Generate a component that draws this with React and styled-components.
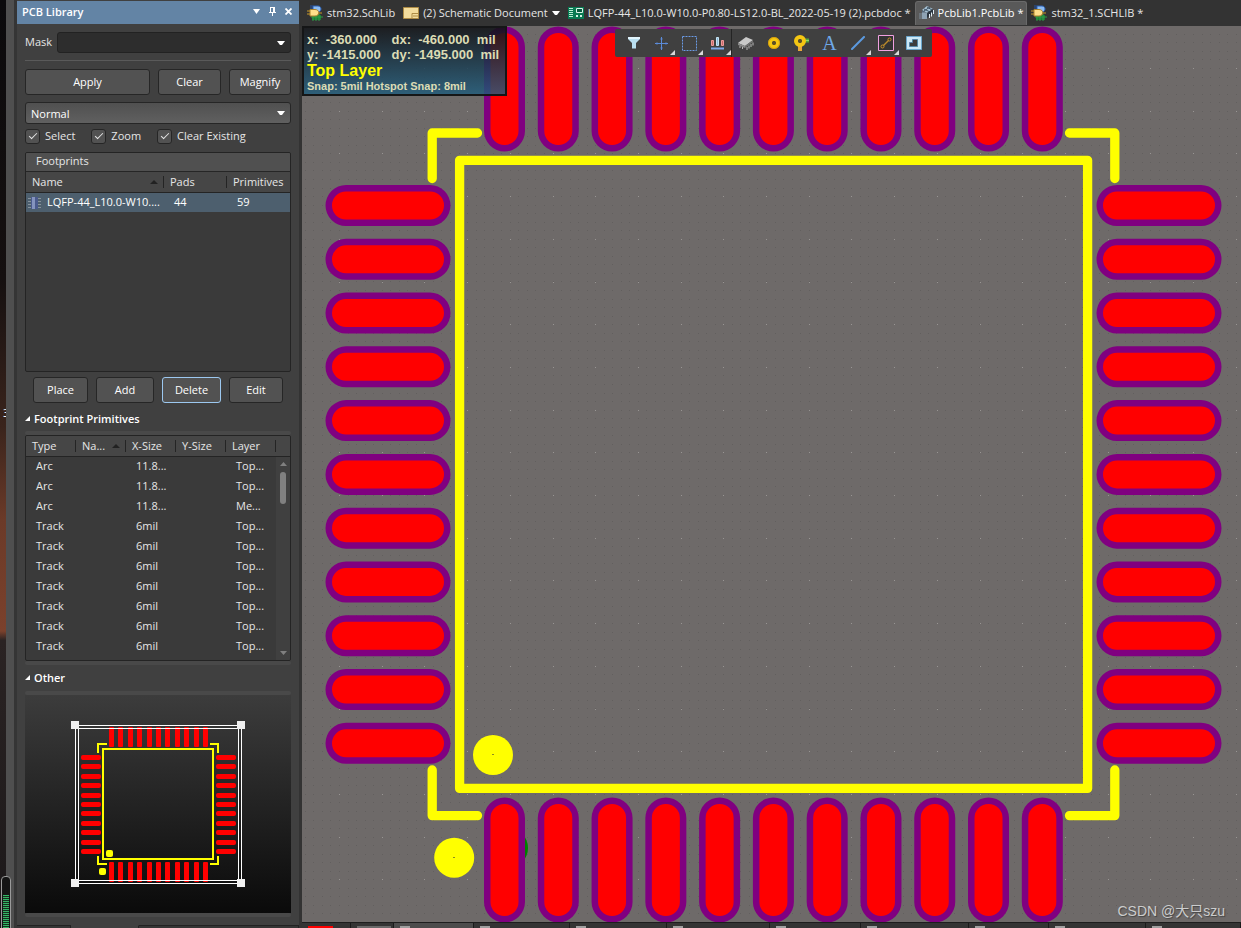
import React, { useState } from 'react';
import styled, { createGlobalStyle } from 'styled-components';

const GlobalStyle = createGlobalStyle`
  *, *::before, *::after {
    box-sizing: border-box;
  }

  body {
    margin: 0;
    background: #333333;
    color: #e6e6e6;
    font-family: "Open Sans", "Noto Sans CJK SC", sans-serif;
    font-size: 11px;
    line-height: 16px;
  }

  button, input, select {
    font: inherit;
    color: inherit;
  }
`;

const Shell = styled.div`
  display: flex;
  height: 100vh;
  min-height: 928px;
  overflow: hidden;
`;

const DesktopEdge = styled.div`
  flex: none;
  display: flex;
  width: 17px;
  background: linear-gradient(#0b0a0c 0%, #151010 30%, #3a241c 46%, #6b3a28 56%, #7b412c 68%, #2a2323 69%, #1b1819 100%);
  position: relative;
  overflow: hidden;
`;

const EdgeBar = styled.div`
  position: relative;
  z-index: 1;
  width: 11px;
  margin-left: auto;
  background: #4f4f4f;
  border-right: 3px solid #353535;
`;

const DesktopLabel = styled.span`
  position: absolute;
  top: 405px;
  left: 3px;
  color: #ffffff;
  font-size: 10px;
`;

const LevelMeter = styled.div`
  position: absolute;
  z-index: 2;
  left: 1px;
  bottom: -4px;
  width: 10px;
  height: 56px;
  padding: 18px 1px 0;
  border: 1px solid #9a9a9a;
  border-radius: 4px;
  background: #141414;

  &::after {
    content: "";
    display: block;
    height: 40px;
    background: repeating-linear-gradient(#35b565 0 1px, #14301e 1px 2px);
  }
`;

const Panel = styled.aside`
  flex: none;
  display: flex;
  flex-direction: column;
  width: 285px;
  padding-top: 1px;
  border-right: 3px solid #333333;
  background: #404040;
`;

const PanelHeader = styled.header`
  display: flex;
  align-items: center;
  height: 23px;
  padding: 0 3px 2px 5px;
  background: #6384a5;
  color: #ffffff;
`;

const PanelTitle = styled.h1`
  flex: 1;
  margin: 0;
  font-size: 11px;
  font-weight: 600;
`;

const HeaderButton = styled.button`
  display: flex;
  align-items: center;
  justify-content: center;
  width: 16px;
  height: 16px;
  padding: 0;
  border: 0;
  background: none;
`;

const PanelBody = styled.div`
  display: flex;
  flex: 1;
  flex-direction: column;
  padding: 8px 8px 0;
`;

const MaskRow = styled.div`
  display: flex;
  align-items: center;
  gap: 5px;
  padding-bottom: 7px;
  border-bottom: 1px solid #5a5a5a;
`;

const MaskLabel = styled.label`
  flex: none;
  width: 27px;
  padding-bottom: 2px;
`;

const Combo = styled.div`
  position: relative;
  width: 100%;

  svg {
    position: absolute;
    top: 9px;
    right: 6px;
    pointer-events: none;
  }
`;

const MaskInput = styled.input`
  display: block;
  width: 100%;
  height: 21px;
  padding: 0 20px 0 5px;
  border: 1px solid #222222;
  border-radius: 3px;
  background: #2d2d2d;
`;

const ModeSelect = styled.select`
  display: block;
  width: 100%;
  height: 22px;
  padding: 1px 20px 0 5px;
  border: 1px solid #262626;
  border-radius: 3px;
  background: linear-gradient(#505050, #606060);
  color: #ffffff;
  appearance: none;
`;

const ButtonRow = styled.div`
  display: grid;
  grid-template-columns: ${(props) => props.$columns};
  gap: 8px;
  margin: ${(props) => props.$margin};
`;

const PushButton = styled.button`
  height: 26px;
  padding: 0 8px;
  border: 1px solid ${(props) => (props.$focused ? '#9cc8f0' : '#262626')};
  border-radius: 3px;
  background: #525252;
  color: #ffffff;
`;

const CheckRow = styled.div`
  display: flex;
  gap: 16px;
  height: 16px;
  margin: 4px 0 8px;
`;

const CheckLabel = styled.label`
  display: flex;
  align-items: center;
  gap: 5px;
`;

const CheckBox = styled.input`
  width: 15px;
  height: 15px;
  margin: 0;
  border: 1px solid #262626;
  border-radius: 3px;
  background: #525252;
  appearance: none;

  &:checked::before {
    content: "";
    display: block;
    width: 8px;
    height: 4px;
    margin: 3px 0 0 3px;
    border: solid #e6e6e6;
    border-width: 0 0 1px 1px;
    transform: rotate(-45deg);
  }
`;

const ListFrame = styled.div`
  position: relative;
  height: ${(props) => props.$height}px;
  border: 1px solid #242424;
  border-radius: 2px;
  background: #3a3a3a;
  overflow: hidden;
`;

const Grid = styled.table`
  width: 100%;
  border-collapse: collapse;
  table-layout: fixed;

  caption {
    height: 19px;
    padding-left: 10px;
    border-bottom: 1px solid #262626;
    background: #505050;
    text-align: left;
  }

  th {
    height: 20px;
    padding: 0 0 0 6px;
    border-bottom: 1px solid #242424;
    background: linear-gradient(#242424, #242424) right center / 1px 12px no-repeat #464646;
    font-weight: 400;
    text-align: left;
    white-space: nowrap;
  }

  th:last-child {
    background: #464646;
  }

  th svg {
    float: right;
    margin: 6px 6px 0 0;
  }

  td {
    height: 20px;
    padding: 0 0 0 10px;
    overflow: hidden;
    white-space: nowrap;
  }
`;

const SelectedRow = styled.tr`
  background: #4d5f6e;
  color: #ffffff;

  td:first-child {
    padding-left: 2px;
  }

  td svg {
    margin-right: 6px;
    vertical-align: middle;
  }
`;

const ScrollTrack = styled.div`
  position: absolute;
  top: 21px;
  right: 0;
  bottom: 0;
  display: flex;
  flex-direction: column;
  align-items: center;
  width: 14px;
  padding: 5px 0;
  background: #404040;
`;

const ScrollThumb = styled.div`
  width: 6px;
  height: 32px;
  margin: 6px 0 auto;
  border-radius: 3px;
  background: #808080;
`;

const SectionTitle = styled.h2`
  display: flex;
  align-items: center;
  gap: 3px;
  height: 18px;
  margin: ${(props) => props.$margin};
  color: #ffffff;
  font-size: 11px;
  font-weight: 600;
`;

const Rail = styled.div`
  height: 4px;
  border-radius: 2px;
  background: #494949;
`;

const Preview = styled.div`
  height: 218px;
  background: linear-gradient(#3c3c3c, #0a0a0a);

  svg {
    display: block;
    width: 100%;
    height: 100%;
  }
`;

const PanelTabs = styled.div`
  display: grid;
  grid-template-columns: 54px 68px 1fr;
  height: 3px;
  margin-top: auto;
  background: #404040;
`;

const PanelTab = styled.div`
  border-top: 1px solid ${(props) => (props.$active ? '#404040' : '#222222')};
  border-right: 1px solid #222222;
  background: ${(props) => (props.$active ? '#404040' : '#353535')};
`;

const Workspace = styled.main`
  display: flex;
  flex: 1;
  flex-direction: column;
  min-width: 0;
`;

const TabBar = styled.nav`
  display: flex;
  flex: none;
  align-items: flex-end;
  height: 26px;
  padding: 0 1px 1px;
  background: #333333;
`;

const DocTab = styled.a`
  display: flex;
  flex: none;
  align-items: center;
  gap: 4px;
  height: 24px;
  padding: 0 3px 1px;
  border: 1px solid ${(props) => (props.$active ? '#6a6a6a' : 'transparent')};
  border-bottom: 0;
  border-radius: 3px 3px 0 0;
  background: ${(props) => (props.$active ? '#595959' : 'transparent')};
  color: ${(props) => (props.$active ? '#ffffff' : '#e6e6e6')};
  text-decoration: none;
  white-space: nowrap;
`;

const Canvas = styled.section`
  position: relative;
  flex: 1;
  min-height: 0;
  background: #6e6a69;
  overflow: hidden;
`;

const Board = styled.svg`
  display: block;
  width: 100%;
  height: 100%;
`;

const Readout = styled.div`
  position: absolute;
  top: 0;
  left: 0;
  width: 205px;
  height: 70px;
  padding: 4px 3px;
  border: 2px solid #151617;
  background: linear-gradient(rgba(16, 18, 22, 0.86), rgba(32, 92, 124, 0.82));
  color: #dcdcb4;
  font-family: "Liberation Sans", sans-serif;
  font-size: 13px;
  font-weight: 700;
  line-height: 15px;
  white-space: pre;
`;

const LayerName = styled.div`
  color: #ffff00;
  font-size: 16px;
  line-height: 18px;
`;

const SnapInfo = styled.div`
  font-size: 11px;
  line-height: 13px;
`;

const ToolBar = styled.div`
  position: absolute;
  top: 3px;
  left: 313px;
  display: flex;
  align-items: center;
  height: 28px;
  padding: 0 4px 0 5px;
  border-radius: 2px;
  background: #404040;
`;

const ToolButton = styled.button`
  position: relative;
  display: flex;
  align-items: center;
  justify-content: center;
  width: 28px;
  height: 28px;
  padding: 0;
  border: 0;
  border-right: 1px solid ${(props) => (props.$divider ? '#242424' : 'transparent')};
  background: none;

  &::after {
    content: "";
    display: ${(props) => (props.$menu ? 'block' : 'none')};
    position: absolute;
    right: 0;
    bottom: 2px;
    width: 5px;
    height: 5px;
    background: #d8d8d8;
    clip-path: polygon(100% 0, 100% 100%, 0 100%);
  }
`;

const Watermark = styled.div`
  position: absolute;
  right: 16px;
  bottom: 1px;
  color: #cccccc;
  font-family: "Liberation Sans", "Noto Sans CJK SC", sans-serif;
  font-size: 14px;
  line-height: 20px;
  text-shadow: 1px 1px 1px #444444;
`;

const StatusStrip = styled.div`
  display: grid;
  flex: none;
  grid-template-columns: 49fr 43fr 80fr 96fr 97fr 103fr 91fr 108fr 80fr 97fr 95fr;
  height: 6px;
  border-top: 1px solid #1e1e1e;
  background: #333333;
`;

const StatusTab = styled.div`
  min-width: 0;
  padding: 3px 6px 0;
  border-right: 1px solid #1a1a1a;
  background: ${(props) => (props.$active ? '#4c4c4c' : '#343434')};
  overflow: hidden;

  &::before {
    content: "";
    display: block;
    width: ${(props) => props.$mark || 10}px;
    height: 2px;
    background: ${(props) => props.$color || '#a0a0a0'};
  }
`;

const Caret = () => (
  <svg width="8" height="4" viewBox="0 0 8 4" aria-hidden="true">
    <path d="M0 0h8L5 4H3z" fill="#ffffff" />
  </svg>
);

const SortMark = () => (
  <svg width="8" height="5" viewBox="0 0 8 5" aria-hidden="true">
    <path d="M4 0l4 4H0z" fill="#222222" />
  </svg>
);

const Fold = () => (
  <svg width="6" height="6" viewBox="0 0 6 6" aria-hidden="true">
    <path d="M5 0v5H0z" fill="#ffffff" />
  </svg>
);

const ChipIcon = () => (
  <svg width="13" height="14" viewBox="0 0 13 14" aria-hidden="true">
    <path d="M0 2.5h13M0 5.5h13M0 8.5h13M0 11.5h13" stroke="#87929c" />
    <rect x="3" y="1" width="7" height="12" fill="#4a5a8c" />
    <rect x="4" y="1" width="3" height="12" fill="#8493be" />
  </svg>
);

const SchLibIcon = () => (
  <svg width="16" height="16" viewBox="0 0 16 16" aria-hidden="true">
    <path d="M5 10h9v5H5z" fill="#1f7a35" />
    <path d="M4 12h12M6 9v7M9 9v7M12 9v7" stroke="#2f9e46" />
    <path d="M6 1h5c4 0 4 6 0 6H6z" fill="#8dbcf2" stroke="#2c61b4" />
    <path d="M3 1h3M3 3h3" stroke="#2452a4" />
    <path d="M3 4.5h5c5 0 5 6.5 0 6.5H3z" fill="#ffe08a" stroke="#a9812c" />
    <path d="M0 6h3M0 9h3M12 8h3" stroke="#c9992b" />
  </svg>
);

const SheetIcon = () => (
  <svg width="16" height="12" viewBox="0 0 16 12" aria-hidden="true">
    <path d="M.5 .5h15v11H.5z" fill="#f3dc9c" stroke="#ad8b45" />
    <path d="M9 6.5h6.5M9 6.5v5M10 9h5" stroke="#ad8b45" fill="none" />
  </svg>
);

const PcbDocIcon = () => (
  <svg width="16" height="12" viewBox="0 0 16 12" aria-hidden="true">
    <path d="M0 0h16v12H0z" fill="#087a52" />
    <path d="M1 1.5h4M1 3.5h4M1 5.5h4M1 7.5h4M1 9.5h4" stroke="#b8efd6" />
    <path d="M8.5 1.5h6v4h-6z" fill="#0a5c40" stroke="#d9f5e9" />
    <path d="M8 8h2v2H8zM12 8h2v2h-2z" fill="#d9f5e9" />
  </svg>
);

const PcbLibIcon = () => (
  <svg width="15" height="14" viewBox="0 0 15 14" aria-hidden="true">
    <path d="M3 4l5-4 6 3-6 4z" fill="#a9c4d6" />
    <path d="M5 3l6 3M8 1l5 3M5 5l6-4" stroke="#3d5263" />
    <path d="M3 4l5 3v5l-5-3z" fill="#56697a" />
    <path d="M8 7l6-4v4l-6 5z" fill="#2b3640" />
    <path d="M10.500 8v4M12.500 6.500v4M14.500 4v4" stroke="#e2ecf3" />
    <path d="M3 6.500h5v6.500H3z" fill="#8ea3b4" />
    <path d="M0 8h3M0 10h3M0 12h3" stroke="#7d8c99" />
  </svg>
);

const FilterIcon = () => (
  <svg width="14" height="12" viewBox="0 0 14 12">
    <path d="M1 0h12v2L9 6v5.5H5V6L1 2z" fill="#b9dff0" />
    <path d="M1 1h12" stroke="#e2f4fc" strokeWidth="2" />
  </svg>
);

const CrossIcon = () => (
  <svg width="13" height="13" viewBox="0 0 13 13">
    <path d="M0 6.5h13M6.5 0v13" stroke="#5b8bd8" />
    <path d="M5 2h3M5 11h3M2 5v3M11 5v3" stroke="#5b8bd8" strokeOpacity=".6" />
  </svg>
);

const MarqueeIcon = () => (
  <svg width="15" height="15" viewBox="0 0 15 15">
    <path d="M.5 .5h14v14H.5z" stroke="#6b9be6" strokeDasharray="2 1" fill="none" />
  </svg>
);

const AlignIcon = () => (
  <svg width="13" height="13" viewBox="0 0 13 13">
    <path d="M.5 3.500h2v5h-2zM10.500 3.500h2v5h-2z" fill="#c96b6b" stroke="#f09a9a" />
    <path d="M5.500.500h2v8h-2z" fill="#8fb9d6" stroke="#c5e4f5" />
    <path d="M0 11.500h13" stroke="#7ea9ea" strokeWidth="2" />
  </svg>
);

const PartIcon = () => (
  <svg width="17" height="14" viewBox="0 0 17 14">
    <path d="M1 7l8-6 7 3-8 6z" fill="#c9c9c9" />
    <path d="M1 7l7 3v2L1 9z" fill="#8c8c8c" />
    <path d="M8 10l8-6v2l-8 6z" fill="#707070" />
    <path d="M3 10v2M5.5 11v2M10 11v3M12 9.5v3M14 8v3M16 6.5v3" stroke="#bababa" />
  </svg>
);

const PadIcon = () => (
  <svg width="12" height="12" viewBox="0 0 12 12">
    <circle cx="6" cy="6" r="4" fill="none" stroke="#f5c712" strokeWidth="4" />
    <circle cx="6" cy="6" r="5.5" fill="none" stroke="#cf960b" strokeWidth=".8" />
    <circle cx="6" cy="6" r="1.7" fill="#5f5020" />
  </svg>
);

const ViaIcon = () => (
  <svg width="17" height="16" viewBox="0 0 17 16">
    <path d="M7 10v6" stroke="#e8a93a" strokeWidth="4" />
    <path d="M10 5.5h6" stroke="#55a53c" strokeWidth="4" />
    <path d="M11 5.5h5" stroke="#93d36c" />
    <circle cx="7" cy="6" r="4" fill="none" stroke="#f5c712" strokeWidth="4" />
    <circle cx="7" cy="6" r="1.7" fill="#5f5020" />
  </svg>
);

const TextGlyph = styled.span`
  color: #6fa8e8;
  font-family: "Liberation Serif", serif;
  font-size: 20px;
  line-height: 24px;
`;

const LineIcon = () => (
  <svg width="14" height="14" viewBox="0 0 14 14">
    <path d="M1 13L13 1" stroke="#5b9ae0" strokeWidth="2" strokeLinecap="round" />
  </svg>
);

const DimensionIcon = () => (
  <svg width="16" height="16" viewBox="0 0 16 16">
    <path d="M.5 .5h15v15H.5z" fill="#333333" stroke="#f0a0e0" />
    <path d="M5.5 10.500l5-5" stroke="#b98a2a" strokeWidth="1.500" />
    <circle cx="4.500" cy="11.500" r="1.500" fill="none" stroke="#c9922a" />
    <circle cx="11.500" cy="4.500" r="1.500" fill="none" stroke="#c9922a" />
  </svg>
);

const RegionIcon = () => (
  <svg width="16" height="14" viewBox="0 0 16 14">
    <path d="M.5 .5h15v13H.5z" fill="#cbe8f7" stroke="#6ba6cc" />
    <path d="M6.5 3.5h5v7h-8v-4h3z" fill="#3c3c3c" stroke="#5585a5" />
  </svg>
);

const tabs = [
  { name: 'stm32.SchLib', icon: <SchLibIcon /> },
  { name: '(2) Schematic Document', icon: <SheetIcon />, menu: true },
  { name: 'LQFP-44_L10.0-W10.0-P0.80-LS12.0-BL_2022-05-19 (2).pcbdoc *', icon: <PcbDocIcon /> },
  { name: 'PcbLib1.PcbLib *', icon: <PcbLibIcon />, active: true },
  { name: 'stm32_1.SCHLIB *', icon: <SchLibIcon /> },
];

const tools = [
  { label: 'Filter', icon: <FilterIcon /> },
  { label: 'Move', icon: <CrossIcon />, menu: true },
  { label: 'Select area', icon: <MarqueeIcon />, menu: true },
  { label: 'Align', icon: <AlignIcon />, menu: true, divider: true },
  { label: 'Component', icon: <PartIcon /> },
  { label: 'Pad', icon: <PadIcon /> },
  { label: 'Via', icon: <ViaIcon /> },
  { label: 'String', icon: <TextGlyph>A</TextGlyph> },
  { label: 'Line', icon: <LineIcon />, menu: true },
  { label: 'Dimension', icon: <DimensionIcon />, menu: true },
  { label: 'Region', icon: <RegionIcon /> },
];

const primitives = [
  ['Arc', '11.8...', 'Top...'],
  ['Arc', '11.8...', 'Top...'],
  ['Arc', '11.8...', 'Me...'],
  ...Array.from({ length: 7 }, () => ['Track', '6mil', 'Top...']),
];

const statusTabs = [
  { color: '#ff0000', mark: 25 },
  { color: '#6a6a6a', mark: 34 },
  { active: true },
  ...Array.from({ length: 8 }, () => ({})),
];

// Grid points: a fine dot every 5 mil and a brighter one every 25 mil
const dots = (step) => {
  let d = '';
  for (let y = 68.5 - 42.7; y < 924; y += step) {
    for (let x = 339.5 - 42.7; x < 1243; x += step) {
      d += `M${Math.round(x - 0.5)} ${Math.round(y - 0.5) + 0.5}h1`;
    }
  }
  return d;
};

const fineDots = dots(8.54);
const coarseDots = dots(42.7);

// 11 pads per side, 0.8 mm pitch
const pads = Array.from({ length: 11 }, (_, i) => {
  const x = 504.5 + i * 53.78;
  const y = 205.5 + i * 53.78;
  return [
    `M${x} 47V131`,
    `M${x} 818V902`,
    `M346 ${y}H430`,
    `M1117 ${y}H1201`,
  ].join('');
}).join('');

const previewOffsets = [0, 9, 19, 28, 38, 47, 56, 66, 75, 85, 94];

const Footprint = () => (
  <Board viewBox="302 26 939 896" preserveAspectRatio="xMidYMid slice" role="img" aria-label="LQFP-44 footprint">
    <path d={fineDots} stroke="#625f5e" shapeRendering="crispEdges" />
    <path d={coarseDots} stroke="#989593" shapeRendering="crispEdges" />
    <circle cx="508" cy="848" r="20" fill="#008000" />
    <g fill="none" strokeLinecap="round" strokeLinejoin="round">
      <path d={pads} stroke="#800080" strokeWidth="41" />
      <path d={pads} stroke="#ff0000" strokeWidth="28" />
      <g stroke="#ffff00" strokeWidth="9.3">
        <path d="M459.6 160.3H1087.6V788.4H459.6z" />
        <path d="M477.5 133H432.2V178.5" />
        <path d="M1069.5 133H1114.8V178.5" />
        <path d="M432.2 770V815.6H477.5" />
        <path d="M1114.8 770V815.6H1069.5" />
      </g>
    </g>
    <circle cx="493" cy="755" r="20" fill="#ffff00" />
    <circle cx="454.2" cy="857.7" r="20" fill="#ffff00" />
    <path d="M492 754.5h2M453 857.5h2" stroke="#8c8c20" />
  </Board>
);

const FootprintPreview = () => (
  <svg viewBox="25 695 266 218" role="img" aria-label="Footprint preview" shapeRendering="crispEdges">
    {previewOffsets.map((n) => (
      <g key={n} fill="#ff0000" shapeRendering="auto">
        <rect x={109 + n} y="727" width="5" height="20" rx="1" />
        <rect x={109 + n} y="862" width="5" height="20" rx="1" />
        <rect x="81" y={755 + n} width="20" height="5" rx="2" />
        <rect x="216" y={755 + n} width="20" height="5" rx="2" />
      </g>
    ))}
    <g fill="none" stroke="#ffff00" strokeWidth="2">
      <path d="M103 749h110v110H103z" />
      <path d="M107 744h-9v9M210 744h8v9M98 856v8h9M218 856v8h-8" />
    </g>
    <g fill="#ffff00" shapeRendering="auto">
      <rect x="106" y="850" width="7" height="7" rx="2" />
      <rect x="99" y="868" width="7" height="7" rx="2" />
    </g>
    <path d="M75.5 725.5h166v158h-166zM78.5 728.5h160v152h-160z" fill="none" stroke="#ffffff" />
    <path d="M71 721h8v8h-8zM237 721h8v8h-8zM71 879h8v8h-8zM237 879h8v8h-8z" fill="#f0f0f0" />
  </svg>
);

const Check = ({ label }) => {
  const [checked, setChecked] = useState(true);

  return (
    <CheckLabel>
      <CheckBox type="checkbox" checked={checked} onChange={() => setChecked(!checked)} />
      {label}
    </CheckLabel>
  );
};

const LibraryPanel = () => {
  const [mask, setMask] = useState('');

  return (
    <Panel>
      <PanelHeader>
        <PanelTitle>PCB Library</PanelTitle>
        <HeaderButton aria-label="Panel menu">
          <svg width="7" height="5" viewBox="0 0 7 5"><path d="M0 0h7L3.5 5z" fill="#ffffff" /></svg>
        </HeaderButton>
        <HeaderButton aria-label="Pin">
          <svg width="7" height="9" viewBox="0 0 7 9">
            <path d="M1.5 0v5M1 .5h4M0 5.5h7M3.5 6v3" stroke="#ffffff" />
            <path d="M4 0h2v5H4z" fill="#ffffff" />
          </svg>
        </HeaderButton>
        <HeaderButton aria-label="Close">
          <svg width="7" height="7" viewBox="0 0 7 7"><path d="M.5 .5l6 6M6.5 .5l-6 6" stroke="#ffffff" strokeWidth="1.8" /></svg>
        </HeaderButton>
      </PanelHeader>
      <PanelBody>
        <MaskRow>
          <MaskLabel htmlFor="mask">Mask</MaskLabel>
          <Combo>
            <MaskInput id="mask" value={mask} onChange={(e) => setMask(e.target.value)} />
            <Caret />
          </Combo>
        </MaskRow>
        <ButtonRow $columns="125fr 63fr 62fr" $margin="8px 0 7px">
          <PushButton>Apply</PushButton>
          <PushButton>Clear</PushButton>
          <PushButton>Magnify</PushButton>
        </ButtonRow>
        <Combo>
          <ModeSelect aria-label="Highlight mode" defaultValue="Normal">
            <option>Normal</option>
            <option>Mask</option>
            <option>Dim</option>
          </ModeSelect>
          <Caret />
        </Combo>
        <CheckRow>
          <Check label="Select" />
          <Check label="Zoom" />
          <Check label="Clear Existing" />
        </CheckRow>
        <ListFrame $height={220}>
          <Grid>
            <caption>Footprints</caption>
            <colgroup>
              <col />
              <col width="63" />
              <col width="63" />
            </colgroup>
            <thead>
              <tr>
                <th>Name<SortMark /></th>
                <th>Pads</th>
                <th>Primitives</th>
              </tr>
            </thead>
            <tbody>
              <SelectedRow>
                <td><ChipIcon />LQFP-44_L10.0-W10....</td>
                <td>44</td>
                <td>59</td>
              </SelectedRow>
            </tbody>
          </Grid>
        </ListFrame>
        <ButtonRow $columns="55fr 58fr 59fr 54fr" $margin="5px 8px 7px">
          <PushButton>Place</PushButton>
          <PushButton>Add</PushButton>
          <PushButton $focused>Delete</PushButton>
          <PushButton>Edit</PushButton>
        </ButtonRow>
        <SectionTitle $margin="0 0 3px"><Fold />Footprint Primitives</SectionTitle>
        <Rail />
        <ListFrame $height={226}>
          <Grid>
            <colgroup>
              <col width="50" />
              <col width="50" />
              <col width="50" />
              <col width="50" />
              <col width="50" />
              <col />
            </colgroup>
            <thead>
              <tr>
                <th>Type</th>
                <th>Na...<SortMark /></th>
                <th>X-Size</th>
                <th>Y-Size</th>
                <th>Layer</th>
                <th aria-label="Scroll" />
              </tr>
            </thead>
            <tbody>
              {primitives.map(([type, size, layer], index) => (
                <tr key={index}>
                  <td>{type}</td>
                  <td />
                  <td>{size}</td>
                  <td />
                  <td>{layer}</td>
                  <td />
                </tr>
              ))}
            </tbody>
          </Grid>
          <ScrollTrack>
            <svg width="7" height="4" viewBox="0 0 7 4"><path d="M3.5 0L7 4H0z" fill="#808080" /></svg>
            <ScrollThumb />
            <svg width="7" height="4" viewBox="0 0 7 4"><path d="M0 0h7L3.5 4z" fill="#808080" /></svg>
          </ScrollTrack>
        </ListFrame>
        <Rail />
        <SectionTitle $margin="4px 0"><Fold />Other</SectionTitle>
        <Rail />
        <Preview><FootprintPreview /></Preview>
        <Rail />
      </PanelBody>
      <PanelTabs>
        <PanelTab />
        <PanelTab $active />
        <PanelTab />
      </PanelTabs>
    </Panel>
  );
};

const App = () => (
  <Shell>
    <GlobalStyle />
    <DesktopEdge>
      <EdgeBar />
      <DesktopLabel>3</DesktopLabel>
      <LevelMeter />
    </DesktopEdge>
    <LibraryPanel />
    <Workspace>
      <TabBar>
        {tabs.map((tab) => (
          <DocTab key={tab.name} href="#" $active={tab.active}>
            {tab.icon}
            {tab.name}
            {tab.menu && <Caret />}
          </DocTab>
        ))}
      </TabBar>
      <Canvas>
        <Footprint />
        <Readout>
          <div>{'x:  -360.000    dx:  -460.000  mil'}</div>
          <div>{'y: -1415.000   dy: -1495.000  mil'}</div>
          <LayerName>Top Layer</LayerName>
          <SnapInfo>Snap: 5mil Hotspot Snap: 8mil</SnapInfo>
        </Readout>
        <ToolBar>
          {tools.map((tool) => (
            <ToolButton key={tool.label} aria-label={tool.label} $menu={tool.menu} $divider={tool.divider}>
              {tool.icon}
            </ToolButton>
          ))}
        </ToolBar>
        <Watermark>CSDN @大只szu</Watermark>
      </Canvas>
      <StatusStrip>
        {statusTabs.map((tab, index) => (
          <StatusTab key={index} $active={tab.active} $color={tab.color} $mark={tab.mark} />
        ))}
      </StatusStrip>
    </Workspace>
  </Shell>
);

export default App;
